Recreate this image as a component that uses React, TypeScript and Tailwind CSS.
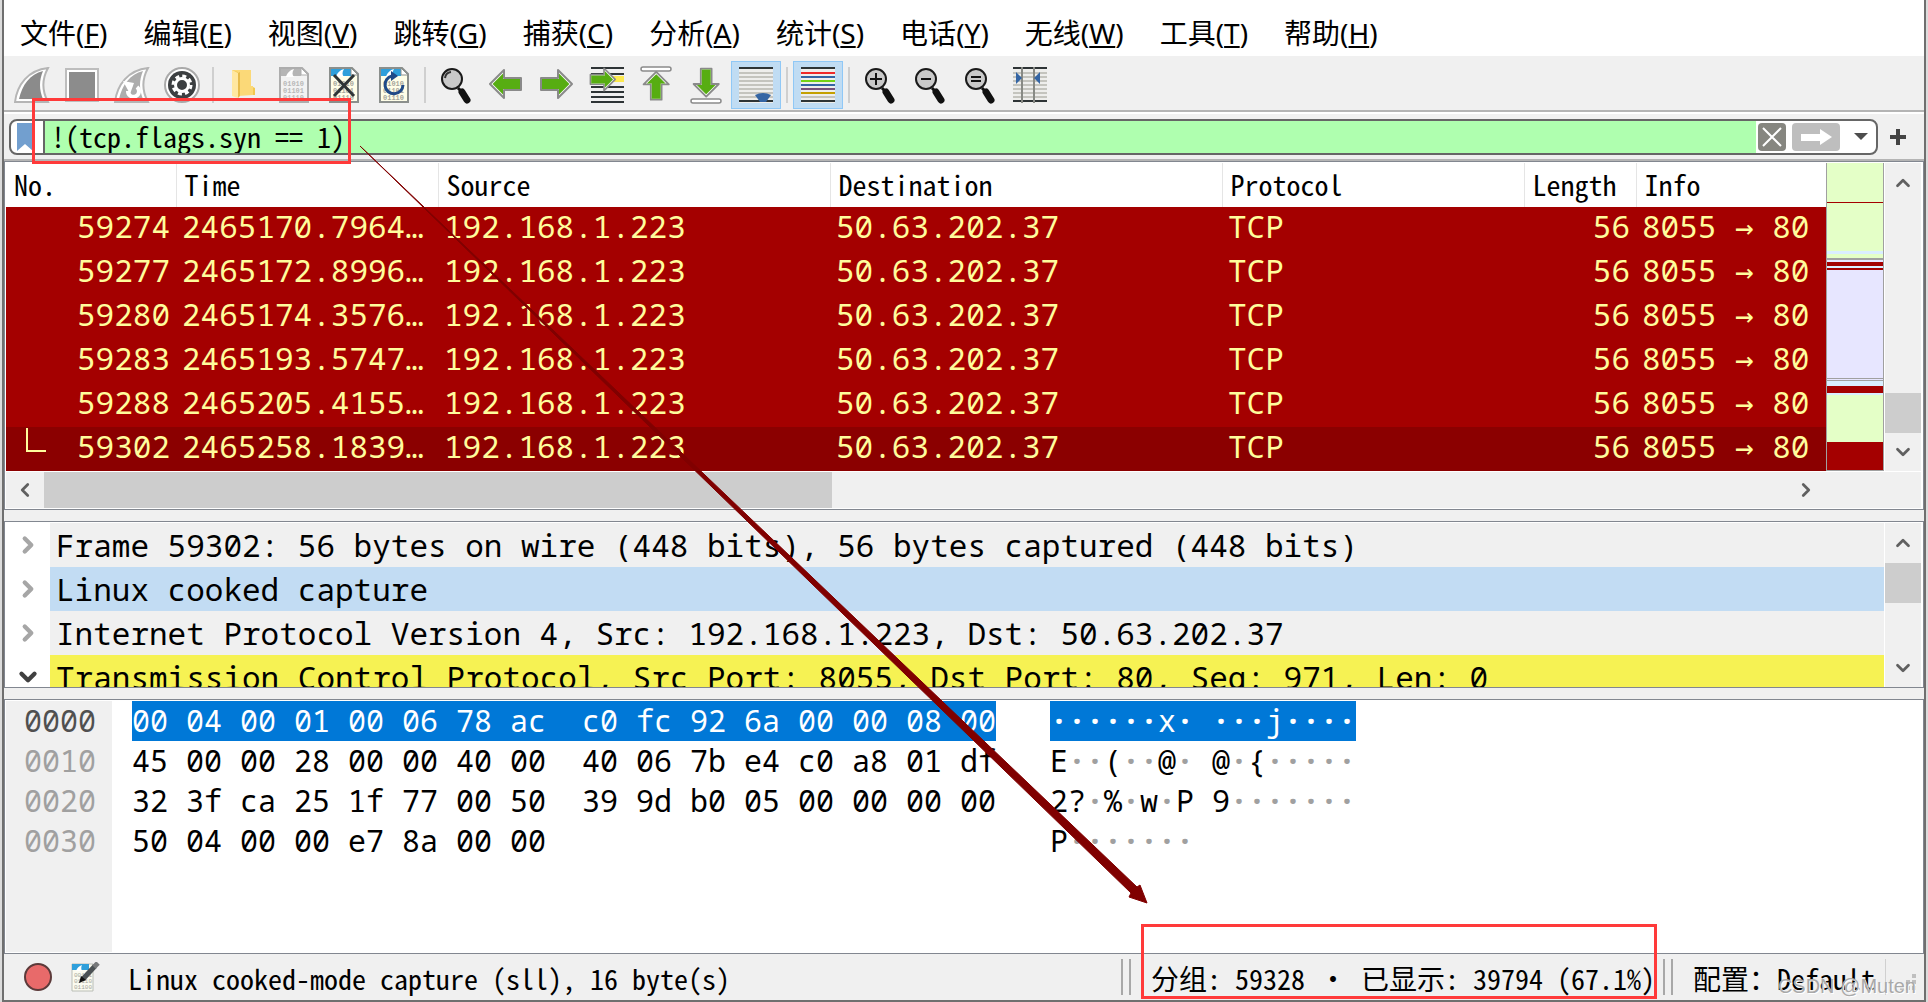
import type { ReactNode } from "react";
import { ChevronDown, ChevronLeft, ChevronRight, ChevronUp } from "lucide-react";
import clsx from "clsx";

const uiFont = "font-['Noto_Sans_Mono_CJK_SC','Liberation_Mono',monospace]";
const dataFont = "font-['Noto_Sans_Mono','DejaVu_Sans_Mono',monospace]";

const menus = [
  { label: "文件", accel: "F" },
  { label: "编辑", accel: "E" },
  { label: "视图", accel: "V" },
  { label: "跳转", accel: "G" },
  { label: "捕获", accel: "C" },
  { label: "分析", accel: "A" },
  { label: "统计", accel: "S" },
  { label: "电话", accel: "Y" },
  { label: "无线", accel: "W" },
  { label: "工具", accel: "T" },
  { label: "帮助", accel: "H" },
];

const packets = [
  { no: "59274", time: "2465170.7964…" },
  { no: "59277", time: "2465172.8996…" },
  { no: "59280", time: "2465174.3576…" },
  { no: "59283", time: "2465193.5747…" },
  { no: "59288", time: "2465205.4155…" },
  { no: "59302", time: "2465258.1839…" },
];

const columns = ["No.", "Time", "Source", "Destination", "Protocol", "Length", "Info"];

const details = [
  { text: "Frame 59302: 56 bytes on wire (448 bits), 56 bytes captured (448 bits)", bg: "bg-[#f0f0f0]" },
  { text: "Linux cooked capture", bg: "bg-[#c2dcf3]" },
  { text: "Internet Protocol Version 4, Src: 192.168.1.223, Dst: 50.63.202.37", bg: "bg-[#f0f0f0]" },
  { text: "Transmission Control Protocol, Src Port: 8055, Dst Port: 80, Seq: 971, Len: 0", bg: "bg-[#f6f253]", open: true },
];

const hexRows = [
  { offset: "0000", hex: "00 04 00 01 00 06 78 ac  c0 fc 92 6a 00 00 08 00", ascii: "······x· ···j····", selected: true },
  { offset: "0010", hex: "45 00 00 28 00 00 40 00  40 06 7b e4 c0 a8 01 df", ascii: "E··(··@· @·{·····" },
  { offset: "0020", hex: "32 3f ca 25 1f 77 00 50  39 9d b0 05 00 00 00 00", ascii: "2?·%·w·P 9·······" },
  { offset: "0030", hex: "50 04 00 00 e7 8a 00 00", ascii: "P·······" },
];

// Stripes of the packet overview next to the list, top to bottom
const stripes = [
  "h-[39px] bg-[#e4ffc7]",
  "h-px bg-[#a40000]",
  "h-12 bg-[#e4ffc7]",
  "h-[3px] bg-[#daeeff]",
  "h-1 bg-[#e4ffc7]",
  "h-0.5 bg-[#a0a0a0]",
  "h-0.5 bg-[#e7e6ff]",
  "h-1 bg-[#a40000]",
  "h-0.5 bg-[#daeeff]",
  "h-0.5 bg-[#a40000]",
  "h-[108px] bg-[#e7e6ff]",
  "h-px bg-[#a0a0a0]",
  "h-px bg-[#e7e6ff]",
  "h-px bg-[#a0a0a0]",
  "h-[5px] bg-[#daeeff]",
  "h-[7px] bg-[#a40000]",
  "h-0.5 bg-[#daeeff]",
  "h-[47px] bg-[#e4ffc7]",
  "flex-1 bg-[#a40000]",
];

function ToolButton({ label, active, children }: { label: string; active?: boolean; children: ReactNode }) {
  return (
    <button
      type="button"
      aria-label={label}
      className={clsx(
        "flex h-12 w-[50px] shrink-0 items-center justify-center border",
        active ? "border-[#90c8f6] bg-[#c0dcf3]" : "border-transparent",
      )}
    >
      {children}
    </button>
  );
}

function ToolSeparator() {
  return (
    <div className="flex w-3 shrink-0 justify-center">
      <div className="h-9 w-0.5 bg-[#cfcfcf]" />
    </div>
  );
}

function FinIcon({ restart }: { restart?: boolean }) {
  return (
    <svg width="36" height="36" viewBox="0 0 36 36">
      <path d="M1 35C3 18 14 3 34 1C28 12 28 24 34 35Z" fill="#fff" stroke="#b5b5b5" strokeWidth="2" />
      <path d="M5 32C8 18 16 7 29 4C25 13 25 23 29 32Z" fill={restart ? "#adadad" : "#8b8b8b"} />
      {restart && (
        <>
          <path d="M23 20A5.5 5.5 0 1 1 14 24" fill="none" stroke="#fff" strokeWidth="4" />
          <path d="M9 14L20 16L16 27Z" fill="#fff" />
        </>
      )}
    </svg>
  );
}

function StopIcon() {
  return (
    <svg width="36" height="36" viewBox="0 0 36 36">
      <rect x="2" y="2" width="32" height="32" fill="#fff" stroke="#bdbdbd" strokeWidth="2" />
      <rect x="5" y="5" width="26" height="26" fill="#8c8c8c" />
    </svg>
  );
}

function GearIcon() {
  return (
    <svg width="38" height="38" viewBox="0 0 38 38">
      <circle cx="19" cy="19" r="17" fill="#fff" stroke="#aaa" strokeWidth="2" />
      <circle cx="19" cy="19" r="14" fill="#3c3f41" />
      <circle cx="19" cy="19" r="6.5" fill="none" stroke="#fff" strokeWidth="3" />
      <circle cx="19" cy="19" r="9" fill="none" stroke="#fff" strokeWidth="3" strokeDasharray="4 3.07" />
    </svg>
  );
}

function FolderIcon() {
  return (
    <svg width="36" height="36" viewBox="0 0 36 36">
      <path d="M6 3H25V19L29 21V28H6Z" fill="#f2c84f" />
      <path d="M6 3H25V19H27V28L12 29V5Z" fill="#fbd978" />
      <path d="M6 3L12 6V31L6 29Z" fill="#ffe7a0" />
      <path d="M12 6L14 5V29L12 31Z" fill="#e7bb4a" />
    </svg>
  );
}

function FileIcon({ muted, children }: { muted?: boolean; children?: ReactNode }) {
  return (
    <svg width="32" height="38" viewBox="0 0 32 38">
      <path d="M2 2H24L30 8V36H2Z" fill={muted ? "#f2f2f2" : "#fffee8"} stroke={muted ? "#adadad" : "#8b8f8c"} strokeWidth="2" />
      <path d="M3 3H23V10H3Z" fill={muted ? "#b5b5b5" : "#2f9fdb"} />
      <path d="M8 11C9 7 12 4 16 3C14 6 14 9 16 11Z" fill="#fff" />
      <path d="M23 2V9H30Z" fill="#fff" stroke={muted ? "#adadad" : "#8b8f8c"} />
      <g fill={muted ? "#b8b8b8" : "#a6a69c"} fontFamily="Liberation Mono" fontSize="7" fontWeight="bold">
        <text x="5" y="20">01010</text>
        <text x="5" y="27">01101</text>
        <text x="5" y="34">01110</text>
      </g>
      {children}
    </svg>
  );
}

function Magnifier({ children }: { children?: ReactNode }) {
  return (
    <svg width="36" height="38" viewBox="0 0 36 38">
      <path d="M20 22L23 25" stroke="#111" strokeWidth="3" />
      <path d="M24 26L29 34" stroke="#111" strokeWidth="7" strokeLinecap="round" />
      <circle cx="14" cy="13" r="10" fill="#c9c9c9" stroke="#1a1a1a" strokeWidth="2" />
      {children}
    </svg>
  );
}

const arrowPath = "M2 18L16 4V12H33V24H16V32Z";

function GreenArrow({ turn = 0 }: { turn?: number }) {
  return (
    <g transform={`rotate(${turn} 18 18)`}>
      <path d={arrowPath} fill="#fff" stroke="#8a8a8a" strokeWidth="2" strokeLinejoin="round" />
      <path d="M6 18L14 10V14H31V22H14V26Z" fill="#57ad12" stroke="#57ad12" strokeWidth="2" />
    </g>
  );
}

function ArrowIcon({ turn, bar }: { turn?: number; bar?: "top" | "bottom" }) {
  return (
    <svg width="36" height="38" viewBox="0 0 36 38">
      {bar ? (
        <g transform={bar === "top" ? "translate(2 4) scale(0.9)" : "translate(2 0) scale(0.9)"}>
          <GreenArrow turn={turn} />
        </g>
      ) : (
        <GreenArrow turn={turn} />
      )}
      {bar && (
        <rect x="3" y={bar === "top" ? 1 : 33} width="30" height="4" rx="2" fill="#fff" stroke="#8a8a8a" strokeWidth="1.5" />
      )}
    </svg>
  );
}

function GotoIcon() {
  return (
    <svg width="38" height="38" viewBox="0 0 38 38">
      <path d="M4 2H37M4 8H37M4 21H37M4 26H37M4 31H37M4 36H37" stroke="#2e3436" strokeWidth="2" />
      <path d="M24 13H37" stroke="#fce94f" strokeWidth="6" />
      <g transform="translate(1 -1) scale(0.8)">
        <GreenArrow turn={180} />
      </g>
    </svg>
  );
}

function LinesIcon({ colors, children }: { colors: string[]; children?: ReactNode }) {
  return (
    <svg width="34" height="36" viewBox="0 0 34 36">
      <rect width="34" height="36" fill="#eeeeec" />
      {colors.map((color, i) => (
        <rect key={i} y={i * 4 + (i === 0 ? 0 : 1)} width="34" height="2" fill={color} />
      ))}
      {children}
    </svg>
  );
}

function Toolbar() {
  return (
    <div className="flex items-center border-b-2 border-[#b4b4b4] bg-[#f0f0f0] pt-1 pb-px pl-[3px]">
      <ToolButton label="开始捕获"><FinIcon /></ToolButton>
      <ToolButton label="停止捕获"><StopIcon /></ToolButton>
      <ToolButton label="重新开始捕获"><FinIcon restart /></ToolButton>
      <ToolButton label="捕获选项"><GearIcon /></ToolButton>
      <ToolSeparator />
      <ToolButton label="打开"><FolderIcon /></ToolButton>
      <ToolButton label="保存"><FileIcon muted /></ToolButton>
      <ToolButton label="关闭">
        <FileIcon>
          <path d="M6 9L26 30M26 9L6 30" stroke="#2e3436" strokeWidth="3" />
        </FileIcon>
      </ToolButton>
      <ToolButton label="重新加载">
        <FileIcon>
          <path d="M14 10A9 9 0 1 0 25 19" fill="none" stroke="#204a87" strokeWidth="3" />
          <path d="M13 5L20 10L13 15Z" fill="#204a87" />
        </FileIcon>
      </ToolButton>
      <ToolSeparator />
      <ToolButton label="查找">
        <Magnifier>
          <path d="M7 12A7 7 0 0 1 13 6" fill="none" stroke="#333" strokeWidth="2" />
        </Magnifier>
      </ToolButton>
      <ToolButton label="上一分组"><ArrowIcon /></ToolButton>
      <ToolButton label="下一分组"><ArrowIcon turn={180} /></ToolButton>
      <ToolButton label="转到分组"><GotoIcon /></ToolButton>
      <ToolButton label="首个分组"><ArrowIcon turn={90} bar="top" /></ToolButton>
      <ToolButton label="最新分组"><ArrowIcon turn={270} bar="bottom" /></ToolButton>
      <ToolButton label="自动滚动" active>
        <LinesIcon colors={["#2e3436", "#c4c4be", "#c4c4be", "#c4c4be", "#c4c4be", "#c4c4be", "#c4c4be", "#c4c4be", "#2e3436"]}>
          <path d="M16 28Q24 24 32 28L27 35H21Z" fill="#3465a4" />
        </LinesIcon>
      </ToolButton>
      <ToolSeparator />
      <ToolButton label="着色" active>
        <LinesIcon colors={["#2e3436", "#ef2929", "#3465a4", "#73d216", "#3465a4", "#75507b", "#c4a000", "#c4c4be", "#2e3436"]} />
      </ToolButton>
      <ToolSeparator />
      <ToolButton label="放大">
        <Magnifier><path d="M8 13H20M14 7V19" stroke="#111" strokeWidth="2" /></Magnifier>
      </ToolButton>
      <ToolButton label="缩小">
        <Magnifier><path d="M9 13H19" stroke="#111" strokeWidth="2" /></Magnifier>
      </ToolButton>
      <ToolButton label="正常大小">
        <Magnifier><path d="M9 11H19M9 15H19" stroke="#111" strokeWidth="2" /></Magnifier>
      </ToolButton>
      <ToolButton label="调整列宽">
        <LinesIcon colors={["#2e3436", "#c4c4be", "#c4c4be", "#c4c4be", "#c4c4be", "#c4c4be", "#c4c4be", "#c4c4be", "#2e3436"]}>
          <path d="M9 0V36M21 0V36" stroke="#888a85" strokeWidth="2" />
          <path d="M3 5L9 11L3 17ZM27 5L21 11L27 17Z" fill="#3465a4" />
        </LinesIcon>
      </ToolButton>
    </div>
  );
}

function FilterBar() {
  return (
    <div className="flex h-[49px] items-center border-t-2 border-b-2 border-t-white border-b-[#b4b4b4] bg-[#f0f0f0] pl-[5px]">
      <div className="flex h-9 flex-1 items-center overflow-hidden rounded-lg border-2 border-[#666] bg-white">
        <button type="button" aria-label="书签" className="flex h-full w-[34px] items-center border-r-2 border-[#666] pl-1.5">
          <svg width="16" height="28" viewBox="0 0 16 28">
            <path d="M0 0H16V28L8 21L0 28Z" fill="#729fcf" />
          </svg>
        </button>
        <input
          type="text"
          aria-label="显示过滤器"
          defaultValue="!(tcp.flags.syn == 1)"
          className={clsx("h-full min-w-0 flex-1 bg-[#afffaf] pb-0.5 pl-1.5 text-[28px] text-black outline-none", uiFont)}
        />
        <button type="button" aria-label="清除" className="ml-0.5 flex size-7 items-center justify-center rounded bg-[#868680]">
          <svg width="20" height="20" viewBox="0 0 20 20">
            <path d="M1 1L19 19M19 1L1 19" stroke="#fff" strokeWidth="2" />
          </svg>
        </button>
        <button type="button" aria-label="应用" className="ml-1.5 flex h-7 w-12 items-center justify-center rounded bg-[#bebebe]">
          <svg width="32" height="16" viewBox="0 0 32 16">
            <path d="M1 5H20V0L32 8L20 16V12H1Z" fill="#fff" />
          </svg>
        </button>
        <button type="button" aria-label="历史" className="mr-2 ml-3.5">
          <svg width="14" height="7" viewBox="0 0 14 7">
            <path d="M0 0H14L7 7Z" fill="#4d4d4d" />
          </svg>
        </button>
      </div>
      <button type="button" aria-label="添加" className="flex w-[46px] items-center pl-[11px]">
        <svg width="18" height="18" viewBox="0 0 18 18">
          <path d="M9 1V17M1 9H17" stroke="#444" strokeWidth="4" />
        </svg>
      </button>
    </div>
  );
}

function PacketList() {
  return (
    <div className="border border-[#828790] bg-white p-px pr-0.5">
      <div className="flex">
        <table className="min-w-0 flex-1 table-fixed border-collapse text-left">
          <colgroup>
            <col className="w-[170px]" />
            <col className="w-[262px]" />
            <col className="w-[392px]" />
            <col className="w-[392px]" />
            <col className="w-[302px]" />
            <col className="w-[112px]" />
            <col className="w-[190px]" />
          </colgroup>
          <thead>
            <tr className={clsx("h-11 text-[28px] leading-10 text-black", uiFont)}>
              {columns.map((name) => (
                <th key={name} className="border-r border-[#e5e5e5] px-2 pt-0 pb-0.5 font-normal whitespace-nowrap last:border-r-0">
                  {name}
                </th>
              ))}
            </tr>
          </thead>
          <tbody className={clsx("text-[31px] leading-9 text-[#fffc9c]", dataFont)}>
            {packets.map((packet, i) => {
              const last = i === packets.length - 1;
              return (
                <tr key={packet.no} className={clsx("h-11", last ? "bg-[#8b0000]" : "bg-[#a40000]")}>
                  <td className="p-0 pb-1.5">
                    <div className="flex justify-between pr-1.5">
                      <span className={clsx("ml-5 h-6 w-5", last && "border-b-2 border-l-2 border-[#fffc9c]")} />
                      {packet.no}
                    </div>
                  </td>
                  <td className="px-1.5 pt-0 pb-1.5 whitespace-nowrap">{packet.time}</td>
                  <td className="px-1.5 pt-0 pb-1.5">192.168.1.223</td>
                  <td className="px-1.5 pt-0 pb-1.5">50.63.202.37</td>
                  <td className="px-1.5 pt-0 pb-1.5">TCP</td>
                  <td className="px-1.5 pt-0 pb-1.5 text-right">56</td>
                  <td className="px-1.5 pt-0 pb-1.5 whitespace-nowrap">
                    8055 <span className="font-['DejaVu_Sans_Mono',monospace] leading-none">→</span> 80
                  </td>
                </tr>
              );
            })}
          </tbody>
        </table>
        <div className="flex w-[58px] flex-col border-x border-b border-[#a0a0a0]">
          {stripes.map((stripe, i) => (
            <div key={i} className={stripe} />
          ))}
        </div>
        <VerticalScrollbar atEnd />
      </div>
      <div className="mt-px flex h-9 bg-[#f0f0f0]">
        <button type="button" aria-label="向左滚动" className="flex w-[38px] items-center justify-center text-[#606060]">
          <ChevronLeft size={22} strokeWidth={3} />
        </button>
        <div className="w-[788px] bg-[#cdcdcd]" />
        <button type="button" aria-label="向右滚动" className="mr-24 ml-auto flex w-[38px] items-center justify-center text-[#606060]">
          <ChevronRight size={22} strokeWidth={3} />
        </button>
      </div>
    </div>
  );
}

function VerticalScrollbar({ atEnd }: { atEnd?: boolean }) {
  return (
    <div className="ml-px flex w-9 shrink-0 flex-col bg-[#f0f0f0] text-[#606060]">
      <button type="button" aria-label="向上滚动" className="flex h-10 items-center justify-center">
        <ChevronUp size={22} strokeWidth={3} />
      </button>
      {atEnd && <div className="flex-1" />}
      <div className="h-10 bg-[#cdcdcd]" />
      {!atEnd && <div className="flex-1" />}
      <button type="button" aria-label="向下滚动" className="flex h-[38px] items-center justify-center">
        <ChevronDown size={22} strokeWidth={3} />
      </button>
    </div>
  );
}

function PacketDetails() {
  return (
    <div className="mt-[11px] flex h-[167px] border border-[#828790] bg-white pt-px pr-0.5">
      <ul className={clsx("min-w-0 flex-1 overflow-hidden text-[31px] leading-[44px] text-black", dataFont)}>
        {details.map((row) => (
          <li key={row.text} className="flex h-11">
            <button type="button" aria-label="展开" className="flex w-[45px] shrink-0 items-center justify-center">
              {row.open ? (
                <ChevronDown size={26} strokeWidth={4} className="text-[#404040]" />
              ) : (
                <ChevronRight size={26} strokeWidth={4} className="text-[#a6a6a6]" />
              )}
            </button>
            <span className={clsx("flex-1 pl-1.5 whitespace-nowrap", row.bg)}>{row.text}</span>
          </li>
        ))}
      </ul>
      <VerticalScrollbar />
    </div>
  );
}

function HexView() {
  return (
    <div className={clsx("mt-[11px] flex min-h-0 flex-1 border border-[#828790] bg-white p-px text-[30px] leading-10", dataFont)}>
      <div className="w-[106px] bg-[#f0f0f0] pl-[18px] text-[#a0a0a0]">
        {hexRows.map((row) => (
          <div key={row.offset} className={clsx(row.selected && "text-[#505050]")}>{row.offset}</div>
        ))}
      </div>
      <div className="ml-5 whitespace-pre text-black">
        {hexRows.map((row) => (
          <div key={row.offset} className={clsx(row.selected && "bg-[#0078d7] text-white")}>{row.hex}</div>
        ))}
      </div>
      <div className="ml-[54px] whitespace-pre text-black">
        {hexRows.map((row) => (
          <div key={row.offset} className={clsx(row.selected && "bg-[#0078d7] text-white")}>
            {row.ascii.split(/(·+)/).map((part, i) => (
              <span
                key={i}
                className={clsx(part.startsWith("·") && "font-bold", part.startsWith("·") && !row.selected && "text-[#a0a0a0]")}
              >
                {part}
              </span>
            ))}
          </div>
        ))}
      </div>
    </div>
  );
}

function Splitter() {
  return <div className="h-9 w-2.5 border-x-2 border-[#a8a8a8]" />;
}

function StatusBar() {
  return (
    <div className={clsx("flex h-[46px] items-center bg-[#f0f0f0] text-[28px] leading-9 whitespace-pre text-black", uiFont)}>
      <button type="button" aria-label="专家信息" className="ml-5">
        <svg width="28" height="28" viewBox="0 0 28 28">
          <circle cx="14" cy="14" r="13" fill="#e86a6a" stroke="#5c3a3a" strokeWidth="2" />
        </svg>
      </button>
      <button type="button" aria-label="捕获文件注释" className="ml-[18px]">
        <svg width="30" height="30" viewBox="0 0 30 30">
          <path d="M2 2H23V29H2Z" fill="#fbfbf0" stroke="#b9bdb6" />
          <path d="M2 2H19V8H2Z" fill="#2f9fdb" />
          <path d="M6 9C7 6 9 4 12 3C11 5 11 7 12 9Z" fill="#fff" />
          <g fill="#a6a69c" fontFamily="Liberation Mono" fontSize="6">
            <text x="4" y="15">00101</text>
            <text x="4" y="21">01110</text>
            <text x="4" y="27">01100</text>
          </g>
          <path d="M13 17L25 4" stroke="#4b5154" strokeWidth="5" />
          <path d="M24 5L28 1" stroke="#77797b" strokeWidth="5" />
          <path d="M9 21L11 14L16 18Z" fill="#111" />
        </svg>
      </button>
      <span className="ml-7 pt-0.5">Linux cooked-mode capture (sll), 16 byte(s)</span>
      <div className="ml-auto flex items-center">
        <Splitter />
        <span className="flex pt-0.5 pr-2 pl-5">
          分组: 59328<span className="w-14 text-center">•</span>已显示: 39794 (67.1%)
        </span>
        <Splitter />
        <button type="button" className="pt-0.5 pl-5">配置：Default</button>
        <div className="ml-2.5 h-9 w-px bg-[#d0d0d0]" />
        <svg className="mr-1.5 ml-3.5 self-end" width="18" height="22" viewBox="0 0 18 22">
          <path d="M12 0h4v4h-4zM6 6h4v4h-4zM12 6h4v4h-4zM0 12h4v4h-4zM6 12h4v4h-4zM12 12h4v4h-4z" fill="#bfbfbf" />
        </svg>
      </div>
    </div>
  );
}

// Red frames and the arrow drawn over the window
function Annotations() {
  return (
    <div className="pointer-events-none absolute -inset-x-0.5 inset-y-0">
      <div className="absolute top-[98px] left-8 h-[66px] w-[319px] border-3 border-[#ff3a3a]" />
      <div className="absolute right-[271px] bottom-[3px] h-[75px] w-[516px] border-3 border-[#ff3a3a]" />
      <svg className="absolute inset-0 size-full" viewBox="0 0 1928 1002" preserveAspectRatio="none">
        <path d="M360 146L1137 887L1140 885L1147 903L1129 897L1131 893Z" fill="#800000" stroke="#800000" />
      </svg>
      <span className="absolute right-3 bottom-1 font-['Liberation_Sans',sans-serif] text-xl leading-6 text-[#a9a9a9] [text-shadow:1px_1px_0_#fff]">
        CSDN @Muten
      </span>
    </div>
  );
}

export default function App() {
  return (
    <div className="relative flex h-screen flex-col overflow-hidden border-x-2 border-[#dcdcdc] bg-[#f0f0f0]">
      <div className="flex min-h-0 flex-1 flex-col border-x-2 border-b-2 border-[#6f6f6f]">
        <nav className="flex h-[57px] gap-1 border-b border-[#f0f0f0] bg-white font-['Noto_Sans','Noto_Sans_CJK_SC',sans-serif] text-[28px]">
          {menus.map((menu) => (
            <button key={menu.accel} type="button" className="px-4 pt-2.5 leading-[46px] text-black">
              {menu.label}(<span className="underline decoration-2 underline-offset-2">{menu.accel}</span>)
            </button>
          ))}
        </nav>
        <Toolbar />
        <FilterBar />
        <PacketList />
        <PacketDetails />
        <HexView />
        <StatusBar />
      </div>
      <Annotations />
    </div>
  );
}
